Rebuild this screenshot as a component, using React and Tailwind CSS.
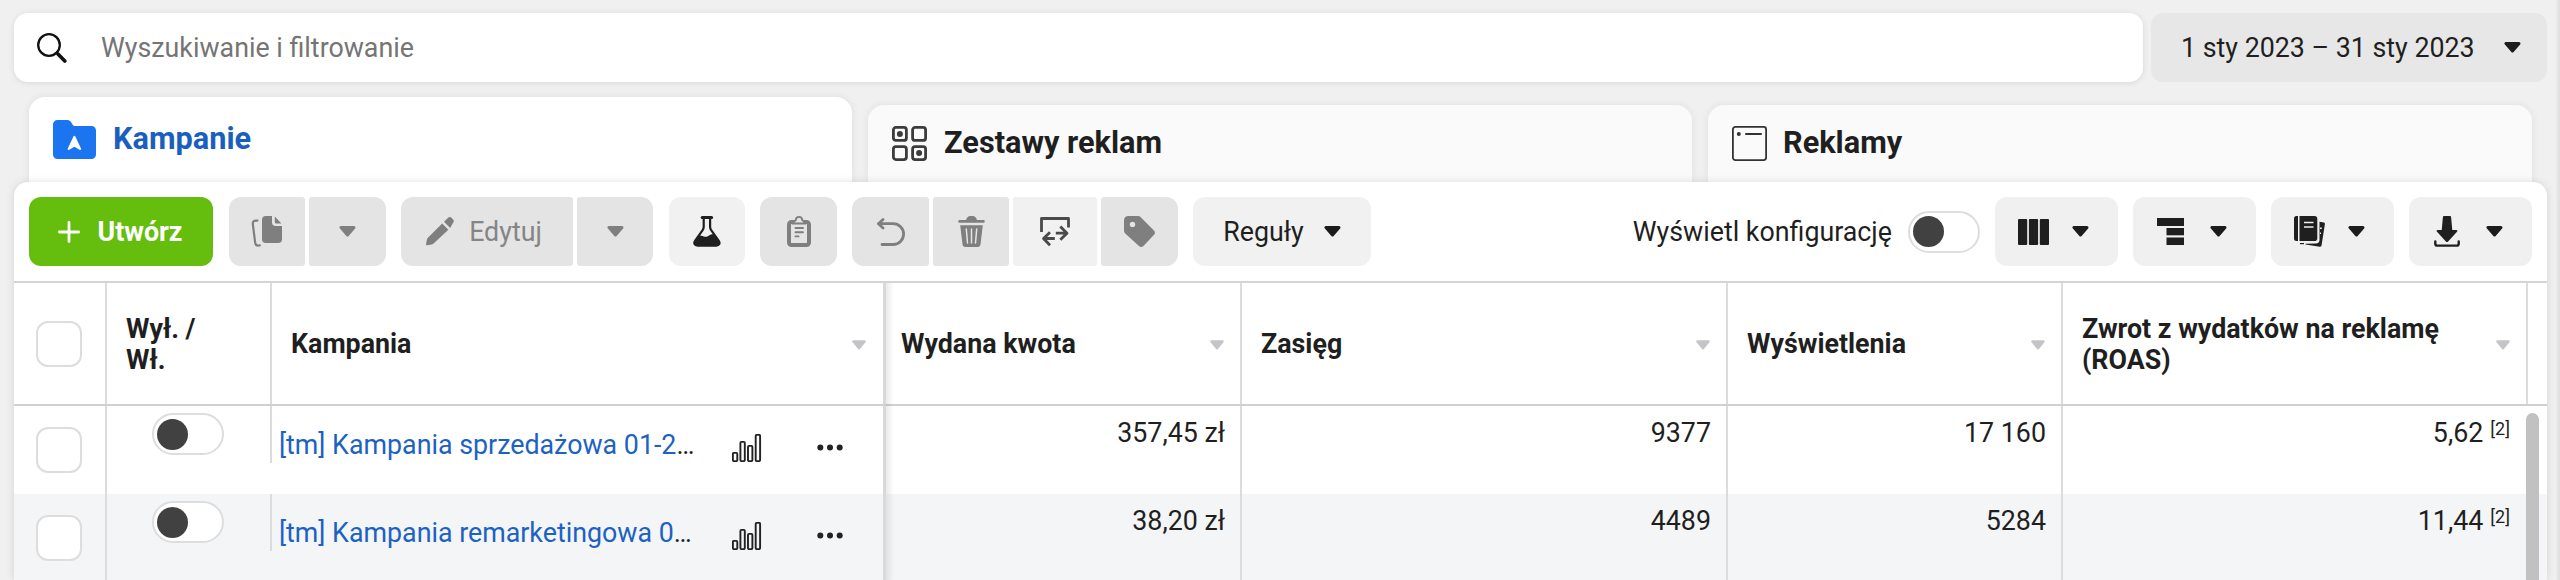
const GRID = "grid grid-cols-[93px_165px_614px_356px_486px_335px_465px_19px]";

function Caret({ className = "text-[#1c1c1c]" }) {
  return (
    <svg width="17" height="11" viewBox="0 0 17 11" className={"shrink-0 " + className}>
      <path d="M2 1.5h13L8.5 9z" fill="currentColor" stroke="currentColor" strokeWidth="3" strokeLinejoin="round" />
    </svg>
  );
}

function SortCaret() {
  return (
    <svg width="14" height="10" viewBox="0 0 14 10" className="shrink-0 text-[#c3c4c8]">
      <path d="M1.5 1.5h11L7 8.2z" fill="currentColor" stroke="currentColor" strokeWidth="2.4" strokeLinejoin="round" />
    </svg>
  );
}

function SearchIcon() {
  return (
    <svg width="30" height="30" viewBox="0 0 30 30" fill="none" stroke="#111" strokeLinecap="round">
      <circle cx="12" cy="12" r="10.8" strokeWidth="2.3" />
      <path d="M19.8 19.8l1 1" strokeWidth="2.4" />
      <path d="M21.2 21.2l6.6 6.8" strokeWidth="3.6" />
    </svg>
  );
}

function FolderIcon() {
  return (
    <svg width="43" height="39" viewBox="0 0 43 39">
      <path d="M4.5 0H14c1.6 0 2.8.5 3.6 1.6L20 5.2c.3.5.8.8 1.500.8H38.500c2.500 0 4.500 2 4.500 4.500v24c0 2.500-2 4.500-4.500 4.500h-34A4.500 4.500 0 0 1 0 34.500v-30C0 2 2 0 4.500 0z" fill="#1b74f0" />
      <path d="M20.400 16.600c.5-1.100 1.500-1.100 2 0L28 28.600c.5 1.100-.4 1.800-1.400 1.200L21.400 26.800l-5.200 3c-1 .6-1.900-.1-1.400-1.200z" fill="#fff" />
    </svg>
  );
}

function AdSetIcon() {
  return (
    <svg width="35" height="35" viewBox="0 0 35 35" fill="none" stroke="#3c3c3c" strokeWidth="2.800">
      <rect x="1.400" y="1.400" width="13" height="13" rx="2.500" />
      <rect x="20.600" y="1.400" width="13" height="13" rx="2.500" />
      <rect x="1.400" y="20.600" width="13" height="13" rx="2.500" />
      <rect x="20.600" y="20.600" width="13" height="13" rx="2.500" />
      <circle cx="7.900" cy="7.900" r="3" fill="#3c3c3c" stroke="none" />
      <circle cx="27.100" cy="27.100" r="3" fill="#3c3c3c" stroke="none" />
    </svg>
  );
}

function AdIcon() {
  return (
    <svg width="35" height="35" viewBox="0 0 35 35" fill="none" stroke="#333" strokeLinecap="round">
      <rect x="0.900" y="0.900" width="33.200" height="33.200" rx="2.500" strokeWidth="1.800" />
      <circle cx="6.800" cy="8" r="2" fill="#333" stroke="none" />
      <path d="M14 8h15" strokeWidth="2" />
    </svg>
  );
}

function PlusIcon() {
  return (
    <svg width="22" height="22" viewBox="0 0 22 22" stroke="#fff" strokeWidth="2.800" strokeLinecap="round">
      <path d="M11 1.400v19.200M1.400 11h19.200" />
    </svg>
  );
}

function CopyIcon() {
  return (
    <svg width="32" height="31" viewBox="0 0 32 31" fill="#7f7f7f">
      <path d="M6.500 4.600H5C2.800 4.600 1.500 6 1.800 8l2.400 18.800c.3 2.100 1.500 2.900 3.300 2.700l1.300-.2" fill="none" stroke="#7f7f7f" strokeWidth="2.200" strokeLinecap="round" />
      <path d="M14.500 0H21v6.500C21 8.700 22.300 10 24.500 10H31v13.500c0 2-1.500 3.500-3.500 3.500h-13c-2 0-3.500-1.500-3.500-3.500v-20C11 1.500 12.500 0 14.500 0z" />
      <path d="M23.800.6l6.600 6.800h-5.200c-.9 0-1.400-.5-1.400-1.400z" />
    </svg>
  );
}

function PencilIcon() {
  return (
    <svg width="28" height="29" viewBox="0 0 28 29" fill="#7f7f7f">
      <path d="M16.200 6.600l6.200 6.200L7.600 26.600c-.6.600-1.300.9-2.200 1L1.500 28.300C.6 28.500 0 28 .1 27l.700-4c.2-.9.500-1.600 1.100-2.200z" />
      <path d="M18 4.800L21.600 1.200c1.500-1.500 3-1.400 4.300 0l.8.800c1.400 1.400 1.500 2.900.1 4.300L24.200 11z" />
    </svg>
  );
}

function FlaskIcon() {
  return (
    <svg width="28" height="31" viewBox="0 0 28 31">
      <path d="M10.700 2.500v8.300c0 1.300-.2 2-.9 3.100L2.200 24.500c-1.900 2.900-.6 5.100 2.300 5.100h18.800c2.900 0 4.200-2.200 2.300-5.100L18 13.900c-.7-1.100-.9-1.800-.9-3.100V2.500" fill="none" stroke="#1f1f1f" strokeWidth="2.200" />
      <path d="M9.200 1.500h9.400" stroke="#1f1f1f" strokeWidth="3" strokeLinecap="round" />
      <path d="M5.500 19.800c2.500-.9 4.300.6 6.500.9 3.300.4 4-2.400 8.500-2.800l6 8.500c.7 2-.8 3.600-3 3.600h-19c-2.300 0-3.800-1.700-3-3.600z" fill="#1f1f1f" />
    </svg>
  );
}

function ClipboardIcon() {
  return (
    <svg width="24" height="31" viewBox="0 0 24 31" fill="none" stroke="#7f7f7f">
      <rect x="2" y="6" width="20" height="23" rx="2.500" strokeWidth="4" />
      <path d="M6 7.500h12c-.3-1.800-1.300-2.600-2.600-3.100C15.200 2 13.800.9 12 .9S8.800 2 8.600 4.400C7.300 4.900 6.300 5.700 6 7.500z" fill="#e4e4e4" strokeWidth="1.800" />
      <path d="M8.500 12h7.500M8.500 16.200h7.500M8.500 20.400h3" strokeWidth="1.900" strokeLinecap="round" />
    </svg>
  );
}

function UndoIcon() {
  return (
    <svg width="28" height="28" viewBox="0 0 28 28" fill="none" stroke="#7f7f7f" strokeWidth="2.800" strokeLinecap="round" strokeLinejoin="round">
      <path d="M6 1.500L1.500 5.700 6 10" />
      <path d="M1.800 5.700H16.200a10.400 10.400 0 0 1 0 20.800H5" />
    </svg>
  );
}

function TrashIcon() {
  return (
    <svg width="27" height="31" viewBox="0 0 27 31" fill="#7f7f7f">
      <path d="M8 4c.9-2.700 2.300-4 4.300-4h2.400c2 0 3.400 1.300 4.300 4z" />
      <rect x="0.300" y="4" width="26.400" height="2.800" rx="1" />
      <path d="M2.200 9.200h22.600l-2.300 19c-.2 1.700-1.200 2.700-2.900 2.700H7.400c-1.700 0-2.700-1-2.900-2.700z" />
      <path d="M8.300 13l1.200 14M13.500 13v14M18.700 13l-1.200 14" stroke="#e4e4e4" strokeWidth="1.500" strokeLinecap="round" />
    </svg>
  );
}

function SwapIcon() {
  return (
    <svg width="30" height="30" viewBox="0 0 30 30" fill="none" stroke="#4a4a4a" strokeWidth="2.800" strokeLinejoin="round">
      <path d="M1.500 15V1.500h27v9" />
      <path d="M14.800 21.500H3.500M10 15.300L3.500 21.500l6.500 6.800" />
      <path d="M15.800 16.200h11M20.300 9.500l6.700 6.700-6.700 6.600" />
    </svg>
  );
}

function TagIcon() {
  return (
    <svg width="31" height="31" viewBox="0 0 31 31">
      <path fillRule="evenodd" d="M4.500 0h9c1.500 0 2.500.4 3.500 1.400l12.700 12.800c1.600 1.600 1.600 3.300.1 4.900L19.700 29.700c-1.700 1.700-3.300 1.700-5 0L1.500 17.800C.5 16.800 0 15.800 0 14.300V4.500C0 1.500 1.500 0 4.500 0zm4 5.700a2.700 2.700 0 1 0 0 5.400 2.700 2.700 0 0 0 0-5.400z" fill="#7f7f7f" />
    </svg>
  );
}

function ColumnsIcon() {
  return (
    <svg width="31" height="26" viewBox="0 0 31 26" fill="#1f1f1f">
      <rect x="0" y="0" width="9.200" height="26" rx="1" />
      <rect x="10.900" y="0" width="9.200" height="26" rx="1" />
      <rect x="21.800" y="0" width="9.200" height="26" rx="1" />
    </svg>
  );
}

function BreakdownIcon() {
  return (
    <svg width="29" height="27" viewBox="-1 0 29 27" fill="#1f1f1f">
      <rect width="27" height="8" />
      <rect x="9.500" y="10" width="17.500" height="7.300" />
      <rect x="9.500" y="19.500" width="17.500" height="7.500" />
    </svg>
  );
}

function ReportIcon() {
  return (
    <svg width="31" height="31" viewBox="0 0 31 31" fill="#1f1f1f">
      <path d="M25.500 5.800l4.300.7c.8.100 1.200.7 1.100 1.500l-3.300 21.300c-.2 1-.8 1.600-1.800 1.400L11.500 28.600v-.9L22 27.600c2.200 0 3.500-1.300 3.500-3.500z" />
      <path d="M26 12.200h1.800M26 17.200h1" stroke="#f0f0f0" strokeWidth="1.500" />
      <path d="M2.500 0H4v25H2.500A2.500 2.500 0 0 1 0 22.500v-20A2.500 2.500 0 0 1 2.500 0z" />
      <path d="M5.500 0H20.500A2.800 2.800 0 0 1 23.300 2.800V22.200A2.800 2.800 0 0 1 20.500 25H5.500z" />
      <path d="M10 6.500h9.500M10 11h9.500" stroke="#f0f0f0" strokeWidth="1.700" />
      <path d="M6 27.600h4" stroke="#1f1f1f" strokeWidth="1.200" />
    </svg>
  );
}

function DownloadIcon() {
  return (
    <svg width="29" height="31" viewBox="-2 0 29 31" fill="#1f1f1f">
      <path d="M10.200 0h5.600c.8 0 1.200.4 1.300 1.200L18.300 14h3.900c1.200 0 1.600.9.800 1.800l-8.900 9.700c-.7.700-1.500.7-2.200 0L3 15.800c-.8-.9-.4-1.800.8-1.800h3.900L8.900 1.200c.1-.8.500-1.200 1.300-1.200z" />
      <path d="M1.300 25.500v2.200c0 1.200.7 1.900 1.900 1.900h19.600c1.200 0 1.900-.7 1.900-1.900v-2.200" fill="none" stroke="#1f1f1f" strokeWidth="2.400" strokeLinecap="round" />
    </svg>
  );
}

function ChartIcon() {
  return (
    <svg width="30" height="28" viewBox="0 0 30 28" fill="none" stroke="#222" strokeWidth="1.900">
      <rect x="0.900" y="18.900" width="4.400" height="8.200" rx="1" />
      <rect x="8.400" y="7.900" width="4.400" height="19.200" rx="1" />
      <rect x="16" y="11.900" width="4.400" height="15.200" rx="1" />
      <rect x="23.700" y="0.900" width="4.400" height="26.200" rx="1" />
    </svg>
  );
}

function DotsIcon() {
  return (
    <svg width="26" height="7" viewBox="0 0 26 7" fill="#222">
      <circle cx="3.300" cy="3.500" r="3" />
      <circle cx="13" cy="3.500" r="3" />
      <circle cx="22.700" cy="3.500" r="3" />
    </svg>
  );
}

function Toggle() {
  return (
    <span className="flex h-[42px] w-[72px] shrink-0 items-center rounded-full border-2 border-[#dddddd] bg-white pl-[3px]">
      <span className="h-[31px] w-[31px] rounded-full bg-[#414141]" />
    </span>
  );
}

function Checkbox() {
  return <span className="h-[46px] w-[46px] rounded-[12px] border-2 border-[#dddddd] bg-white" />;
}

function ToolButton({ children, className }) {
  return <button className={"flex h-[69px] shrink-0 items-center justify-center " + className}>{children}</button>;
}

function MenuButton({ icon }) {
  return (
    <button className="flex h-[69px] w-[123px] items-center justify-between rounded-[12px] bg-[#f0f0f0] pr-[29px] pl-[23px]">
      {icon}
      <Caret />
    </button>
  );
}

function HeaderCell({ children, className = "pl-[19px]" }) {
  return (
    <div className={"flex items-center justify-between border-r-2 border-[#dcdcdc] pt-0.5 pr-[16px] " + className}>
      <span>{children}</span>
      <SortCaret />
    </div>
  );
}

function ValueCell({ children }) {
  return <div className="flex justify-end border-r-2 border-[#dcdcdc] pt-[11px] pr-[15px] leading-[32px]">{children}</div>;
}

function Row({ name, spent, reach, views, roas, className }) {
  return (
    <div className={GRID + " h-[88px] " + className}>
      <div className="flex items-center border-r-2 border-[#dcdcdc] pl-[22px]">
        <Checkbox />
      </div>
      <div className="flex h-[57px] items-start border-r-2 border-[#dcdcdc] pt-[7px] pl-[45px]">
        <Toggle />
      </div>
      <div className="flex items-start border-r-[3px] border-[#d9d9d9] pl-[7px]">
        <div className="w-[453px] pt-[23px] leading-[32px]">
          <span className="text-[#1c62c2]">{name}</span>…
        </div>
        <div className="w-[85px] pt-[28px]">
          <ChartIcon />
        </div>
        <div className="pt-[38px]">
          <DotsIcon />
        </div>
      </div>
      <ValueCell>{spent}</ValueCell>
      <ValueCell>{reach}</ValueCell>
      <ValueCell>{views}</ValueCell>
      <div className="flex justify-end gap-[7px] pt-[11px] pr-[18px] leading-[32px]">
        <span>{roas}</span>
        <span className="text-[18px] leading-[24px]">[2]</span>
      </div>
      <div />
    </div>
  );
}

const rows = [
  { name: "[tm] Kampania sprzedażowa 01-2", spent: "357,45 zł", reach: "9377", views: "17 160", roas: "5,62", className: "bg-white" },
  { name: "[tm] Kampania remarketingowa 0", spent: "38,20 zł", reach: "4489", views: "5284", roas: "11,44", className: "bg-[#f4f5f7]" },
];

export default function App() {
  return (
    <div className="relative h-[580px] w-[2560px] overflow-hidden bg-[#f0f0f0] pt-[13px] pl-[14px] font-['Roboto',sans-serif] text-[26.8px] whitespace-nowrap text-[#1f1f1f]">
      <div className="flex h-[69px] gap-2">
        <div className="flex w-[2129px] items-center gap-[34px] rounded-[14px] bg-white pl-[23px] text-[#757575] shadow-[0_1px_6px_rgba(0,0,0,0.1)]">
          <SearchIcon />
          <span className="pt-0.5">Wyszukiwanie i filtrowanie</span>
        </div>
        <div className="flex w-[396px] items-center justify-between rounded-[12px] bg-[#e7e7e7] pr-[26px] pl-[30px]">
          <span className="pt-0.5">1 sty 2023 – 31 sty 2023</span>
          <Caret />
        </div>
      </div>

      <div className="flex h-[100px] items-end gap-4 pl-[15px] text-[30.7px] font-bold">
        <div className="relative z-10 flex h-[85px] w-[823px] items-center gap-[17px] rounded-t-[16px] bg-white pl-[24px] text-[#1a5fc0] shadow-[0_0_8px_rgba(0,0,0,0.08)]">
          <FolderIcon />
          <span>Kampanie</span>
        </div>
        <div className="flex h-[77px] w-[824px] items-center gap-[17px] rounded-t-[16px] bg-[#fafafa] pl-[24px] shadow-[0_0_8px_rgba(0,0,0,0.07)]">
          <AdSetIcon />
          <span>Zestawy reklam</span>
        </div>
        <div className="flex h-[77px] w-[824px] items-center gap-[16px] rounded-t-[16px] bg-[#fafafa] pl-[24px] shadow-[0_0_8px_rgba(0,0,0,0.07)]">
          <AdIcon />
          <span>Reklamy</span>
        </div>
      </div>

      <div className="relative z-20 h-[398px] w-[2533px] rounded-t-[14px] bg-white shadow-[0_0_8px_rgba(0,0,0,0.12)]">
        <div className="flex h-[101px] items-center justify-between border-b-2 border-[#d4d4d4] pr-[15px] pl-[15px]">
          <div className="flex">
            <ToolButton className="mr-4 w-[184px] gap-[18px] rounded-[12px] bg-[#65bd0d] pr-[2px] font-bold text-white">
              <PlusIcon />
              <span className="pt-0.5">Utwórz</span>
            </ToolButton>
            <ToolButton className="mr-1 w-[76px] rounded-l-[12px] rounded-r-[3px] bg-[#e4e4e4]"><CopyIcon /></ToolButton>
            <ToolButton className="mr-[15px] w-[77px] rounded-l-[3px] rounded-r-[12px] bg-[#e4e4e4]"><Caret className="text-[#7f7f7f]" /></ToolButton>
            <ToolButton className="mr-1 w-[172px] gap-[15px] rounded-l-[12px] rounded-r-[3px] bg-[#e4e4e4] pr-[6px] text-[#858585]">
              <PencilIcon />
              <span className="pt-0.5">Edytuj</span>
            </ToolButton>
            <ToolButton className="mr-[16px] w-[76px] rounded-l-[3px] rounded-r-[12px] bg-[#e4e4e4]"><Caret className="text-[#7f7f7f]" /></ToolButton>
            <ToolButton className="mr-[15px] w-[76px] rounded-[12px] bg-[#f1f1f1]"><FlaskIcon /></ToolButton>
            <ToolButton className="mr-[15px] w-[77px] rounded-[12px] bg-[#e4e4e4]"><ClipboardIcon /></ToolButton>
            <ToolButton className="mr-1 w-[77px] rounded-l-[12px] rounded-r-[3px] bg-[#e4e4e4]"><UndoIcon /></ToolButton>
            <ToolButton className="mr-1 w-[76px] rounded-[3px] bg-[#e4e4e4]"><TrashIcon /></ToolButton>
            <ToolButton className="mr-1 w-[84px] rounded-[3px] bg-[#f1f1f1]"><SwapIcon /></ToolButton>
            <ToolButton className="mr-[15px] w-[77px] rounded-l-[3px] rounded-r-[12px] bg-[#e4e4e4]"><TagIcon /></ToolButton>
            <ToolButton className="w-[178px] gap-[20px] rounded-[12px] bg-[#f1f1f1]">
              <span className="pt-0.5">Reguły</span>
              <Caret />
            </ToolButton>
          </div>
          <div className="flex items-center">
            <span className="mr-4 pt-0.5">Wyświetl konfigurację</span>
            <Toggle />
            <div className="ml-[15px] flex gap-[15px]">
              <MenuButton icon={<ColumnsIcon />} />
              <MenuButton icon={<BreakdownIcon />} />
              <MenuButton icon={<ReportIcon />} />
              <MenuButton icon={<DownloadIcon />} />
            </div>
          </div>
        </div>

        <div className="relative">
          <div className={GRID + " h-[123px] border-b-2 border-[#d0d0d0] leading-[31px] font-bold"}>
            <div className="flex items-center border-r-2 border-[#dcdcdc] pt-px pl-[22px]">
              <Checkbox />
            </div>
            <div className="flex items-center border-r-2 border-[#dcdcdc] pt-0.5 pl-[19px]">
              <span>Wył. /<br />Wł.</span>
            </div>
            <div className="flex items-center justify-between border-r-[3px] border-[#d9d9d9] pt-0.5 pr-[17px] pl-[19px]">
              <span>Kampania</span>
              <SortCaret />
            </div>
            <HeaderCell className="pl-[15px]">Wydana kwota</HeaderCell>
            <HeaderCell>Zasięg</HeaderCell>
            <HeaderCell>Wyświetlenia</HeaderCell>
            <HeaderCell>Zwrot z wydatków na reklamę<br />(ROAS)</HeaderCell>
            <div />
          </div>
          {rows.map((row) => (
            <Row key={row.name} {...row} />
          ))}
          <div className="absolute top-0 left-[872px] h-full w-[8px] bg-linear-to-r from-black/8 to-transparent" />
          <div className="absolute top-[130px] left-[2512px] h-[200px] w-[13px] rounded-full bg-[#c1c1c1]" />
        </div>
      </div>
      <div className="absolute top-0 right-0 h-full w-[4px] bg-linear-to-r from-[#ececec] to-[#dedede]" />
    </div>
  );
}
